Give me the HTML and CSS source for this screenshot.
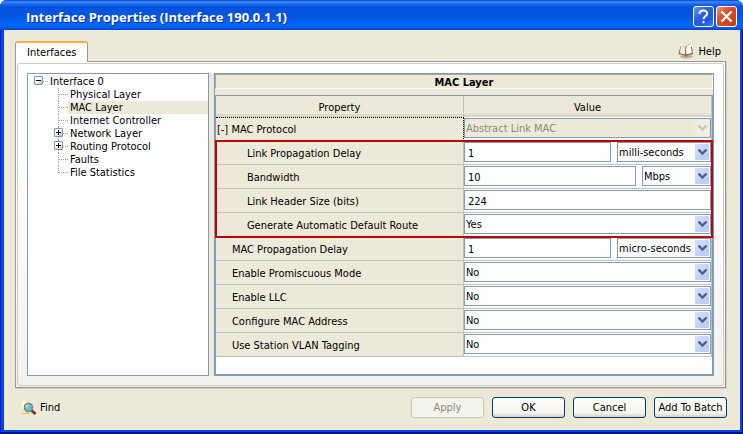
FILE: index.html
```html
<!DOCTYPE html>
<html lang="en">
<head>
<meta charset="utf-8">
<title>Interface Properties (Interface 190.0.1.1)</title>
<link rel="stylesheet" href="styles.css">
</head>
<body>
<svg class="defs" width="0" height="0" aria-hidden="true">
  <symbol id="arrow" viewBox="0 0 14 16">
    <path d="M3.500 5.500 7.500 9.500 11.500 5.500" fill="none" stroke="currentColor" stroke-width="2.400"/>
  </symbol>
</svg>
<main class="window">
  <header class="titlebar">
    <h1>Interface Properties (Interface 190.0.1.1)</h1>
    <button class="caption help-caption" type="button" aria-label="What's this">
      <svg viewBox="0 0 19 19"><path d="M5.500 7C5.500 2.500 13.200 2.500 13.200 6.500 13.200 9 9.500 9 9.500 12.200M9.500 14v2.200" fill="none" stroke="#fff" stroke-width="2"/></svg>
    </button>
    <button class="caption close-caption" type="button" aria-label="Close">
      <svg viewBox="0 0 19 19"><path d="M4.500 4.500 14.500 14.500M14.500 4.500 4.500 14.500" fill="none" stroke="#fff" stroke-width="2.400"/></svg>
    </button>
  </header>
  <div class="client">
    <div class="tabbar">
      <button class="tab" type="button">Interfaces</button>
      <a class="tool help" href="#help">
        <svg width="16" height="15" viewBox="0 0 16 15">
          <ellipse cx="8.500" cy="12.500" rx="6.500" ry="1.800" fill="#b5b1a2"/>
          <path d="M2.500 2.500 0.300 10.300 6.500 11 8 13 9.500 11 15 10.300 14 3Z" fill="#8a5230"/>
          <path d="M3 2 1.500 9.200 7.500 10.500 8 3.200Z" fill="#f1ece0"/>
          <path d="M8 3.500 9.500 1 12.500 0.300 14 9 8 10.600Z" fill="#fff"/>
          <path d="M8 3.500 9.500 1 12.500 0.300" fill="none" stroke="#aaa69c" stroke-width=".7"/>
          <path d="M7.700 3V11.500" stroke="#75604f" stroke-width=".9"/>
        </svg>
        Help
      </a>
    </div>
    <section class="panel">
      <div class="panel-inner">
        <nav class="tree" aria-label="Interfaces">
          <ul>
            <li class="root"><button class="toggle" type="button" aria-label="Collapse"><svg viewBox="0 0 7 7"><path d="M1 3.500H6" stroke="#000"/></svg></button><a href="#i0">Interface 0</a>
              <ul>
                <li><a href="#physical">Physical Layer</a></li>
                <li><a class="selected" href="#mac">MAC Layer</a></li>
                <li><a href="#controller">Internet Controller</a></li>
                <li><button class="toggle" type="button" aria-label="Expand"><svg viewBox="0 0 7 7"><path d="M1 3.500H6M3.500 1V6" stroke="#000"/></svg></button><a href="#network">Network Layer</a></li>
                <li><button class="toggle" type="button" aria-label="Expand"><svg viewBox="0 0 7 7"><path d="M1 3.500H6M3.500 1V6" stroke="#000"/></svg></button><a href="#routing">Routing Protocol</a></li>
                <li><a href="#faults">Faults</a></li>
                <li><a href="#stats">File Statistics</a></li>
              </ul>
            </li>
          </ul>
        </nav>
        <div class="splitter"></div>
        <div class="sheet">
          <h2>MAC Layer</h2>
          <div class="grid-wrap">
            <table>
              <thead><tr><th scope="col">Property</th><th scope="col">Value</th></tr></thead>
              <tbody>
                <tr class="focused"><td class="group"><label for="proto">[-] MAC Protocol</label></td>
                  <td><div class="field"><span class="combo"><select id="proto" disabled><option>Abstract Link MAC</option></select><svg><use href="#arrow"/></svg></span></div></td></tr>
              </tbody>
              <tbody class="marked">
                <tr><td><label for="lpd">Link Propagation Delay</label></td>
                  <td><div class="field"><input id="lpd" type="text" value="1"><span class="combo unit"><select aria-label="Delay unit"><option>milli-seconds</option></select><svg><use href="#arrow"/></svg></span></div></td></tr>
                <tr><td><label for="bw">Bandwidth</label></td>
                  <td><div class="field"><input id="bw" type="text" value="10"><span class="combo unit-short"><select aria-label="Bandwidth unit"><option>Mbps</option></select><svg><use href="#arrow"/></svg></span></div></td></tr>
                <tr><td><label for="lhs">Link Header Size (bits)</label></td>
                  <td><div class="field"><input id="lhs" type="text" value="224"></div></td></tr>
                <tr><td><label for="route">Generate Automatic Default Route</label></td>
                  <td><div class="field"><span class="combo"><select id="route"><option>Yes</option></select><svg><use href="#arrow"/></svg></span></div></td></tr>
              </tbody>
              <tbody>
                <tr><td><label for="mpd">MAC Propagation Delay</label></td>
                  <td><div class="field"><input id="mpd" type="text" value="1"><span class="combo unit"><select aria-label="MAC delay unit"><option>micro-seconds</option></select><svg><use href="#arrow"/></svg></span></div></td></tr>
                <tr><td><label for="prom">Enable Promiscuous Mode</label></td>
                  <td><div class="field"><span class="combo"><select id="prom"><option>No</option></select><svg><use href="#arrow"/></svg></span></div></td></tr>
                <tr><td><label for="llc">Enable LLC</label></td>
                  <td><div class="field"><span class="combo"><select id="llc"><option>No</option></select><svg><use href="#arrow"/></svg></span></div></td></tr>
                <tr><td><label for="addr">Configure MAC Address</label></td>
                  <td><div class="field"><span class="combo"><select id="addr"><option>No</option></select><svg><use href="#arrow"/></svg></span></div></td></tr>
                <tr><td><label for="vlan">Use Station VLAN Tagging</label></td>
                  <td><div class="field"><span class="combo"><select id="vlan"><option>No</option></select><svg><use href="#arrow"/></svg></span></div></td></tr>
              </tbody>
            </table>
          </div>
        </div>
      </div>
    </section>
    <footer class="actions">
      <a class="tool find" href="#find">
        <svg width="17" height="17" viewBox="0 0 17 17">
          <path d="M1 1H8.500L10.500 3.500V14.500H1Z" fill="#f5e4a8"/>
          <path d="M1.500 1.500H6.500V6L1.500 11Z" fill="#fffbe4"/>
          <path d="M1 14.500H10" stroke="#cfc08c" stroke-width="1"/>
          <path d="M11.500 11.500 15.500 15" stroke="#7d2f12" stroke-width="2.800"/>
          <circle cx="8.500" cy="8.500" r="4" fill="#62c3cc" stroke="#77858c" stroke-width="1.600"/>
          <path d="M6.300 8.500A2.300 2.300 0 0 1 8.500 6.200" fill="none" stroke="#d5f4f4" stroke-width="1.200"/>
        </svg>
        Find
      </a>
      <button type="button" disabled>Apply</button>
      <button type="button">OK</button>
      <button type="button">Cancel</button>
      <button type="button">Add To Batch</button>
    </footer>
  </div>
</main>
</body>
</html>
```
FILE: styles.css
```css
* { box-sizing: border-box; }

body {
  margin: 0;
  background: #fff;
  color: #000;
  font: 11px/13px "DejaVu Sans Condensed", "Noto Sans", sans-serif;
}

button, input, select { margin: 0; font: inherit; color: inherit; }
a { color: inherit; text-decoration: none; }
ul { margin: 0; padding: 0; list-style: none; }
.defs { position: absolute; }

.window {
  display: flex;
  flex-direction: column;
  min-height: 100vh;
  padding: 0 3px 4px 4px;
  border-radius: 7px 7px 0 0;
  background: #0046e0;
  box-shadow: inset -1px -2px 0 #00138c, inset 1px 0 0 #0019cf;
  overflow: hidden;
}

.titlebar {
  display: flex;
  align-items: center;
  gap: 2px;
  height: 30px;
  margin: 0 -3px 0 -4px;
  padding: 3px 6px 0 26px;
  background: linear-gradient(#0a45c8 0, #3c8cf8 2px, #1a6af0 4px, #0453dd 7px, #0355e0 16px, #0466fc 24px, #0462f4 27px, #0043cc 30px);
}

.titlebar h1 {
  flex: 1;
  margin: 0;
  color: #fff;
  font: bold 13px/18px "Open Sans", sans-serif;
  text-shadow: 1px 1px 0 #0b2f92;
}

.caption {
  width: 21px;
  height: 21px;
  padding: 0;
  border: 1px solid #fff;
  border-radius: 3px;
}
.caption svg { display: block; width: 19px; height: 19px; }
.help-caption { background: linear-gradient(135deg, #6f93ee, #2c5fe0 40%, #2358d8 70%, #3c7cf8); }
.close-caption { background: linear-gradient(135deg, #ee9578, #dc4c28 40%, #d44420 70%, #c03c18); }

.client {
  flex: 1;
  display: flex;
  flex-direction: column;
  padding: 11px 13px 12px 11px;
  background: #ece9d8;
}

.tabbar { display: flex; justify-content: space-between; align-items: flex-start; height: 20px; }

.tab {
  position: relative;
  z-index: 1;
  height: 21px;
  padding: 0 11px;
  border: 1px solid #919b9c;
  border-top: 2px solid #f9b233;
  border-bottom: 0;
  border-radius: 3px 3px 0 0;
  background: #fff;
}

.tool { display: flex; align-items: center; gap: 4px; }
.help { height: 20px; margin-right: 6px; }

.panel {
  flex: 1;
  display: flex;
  margin-right: 1px;
  padding: 1px;
  border: 1px solid #919b9c;
  box-shadow: 1px 1px 0 #d0cebf;
  background: linear-gradient(#fff 25%, #f3f1ec);
}

.panel-inner {
  flex: 1;
  display: flex;
  padding: 9px;
  border: 1px solid #d0cebf;
  border-radius: 3px;
}

.tree { flex: 181; border: 1px solid #7f9db9; background: #fff; }
.splitter { width: 5px; background: #ece9d8; }
.sheet { flex: 501; display: flex; flex-direction: column; border: 1px solid #7f9db9; background: #ece9d8; }

.tree > ul { padding: 1px 0 0 6px; }
.tree li { position: relative; }
.tree a { display: block; margin-left: 14px; padding-left: 2px; }
.tree ul ul { padding-left: 20px; }
.tree .selected { background: #ece9d8; }
.tree li li::before {
  content: "";
  position: absolute;
  top: 6px;
  left: 4px;
  width: 10px;
  border-top: 1px dotted #a0a0a0;
}
.tree li li::after {
  content: "";
  position: absolute;
  top: 0;
  left: 4px;
  height: 13px;
  border-left: 1px dotted #a0a0a0;
}
.tree li li:last-child::after { height: 7px; }
.root::before {
  content: "";
  position: absolute;
  top: 6px;
  left: 9px;
  width: 5px;
  border-top: 1px dotted #a0a0a0;
}
.toggle {
  position: absolute;
  z-index: 1;
  top: 1px;
  left: 0;
  width: 9px;
  height: 9px;
  padding: 0;
  border: 1px solid #7898b5;
  border-radius: 1px;
  background: linear-gradient(135deg, #fff 40%, #c8c0b0);
}
.toggle svg { display: block; width: 7px; height: 7px; }

.sheet h2 {
  height: 15px;
  margin: 0 0 6px;
  border-top: 1px solid #aca899;
  border-left: 1px solid #aca899;
  border-right: 1px solid #fff;
  border-bottom: 1px solid #fff;
  font: bold 11px/15px "DejaVu Sans Condensed", sans-serif;
  text-align: center;
}

.grid-wrap { flex: 1; border: 1px solid #7f9db9; background: #fff; }

table { width: 100%; table-layout: fixed; border-collapse: separate; border-spacing: 0; }
th, td { padding: 0; text-align: left; }
th {
  height: 21px;
  padding-top: 2px;
  border-right: 1px solid #c8c5b2;
  background: linear-gradient(#ece9d8 80%, #d2cebe);
  font-weight: normal;
  text-align: center;
}
td { height: 24px; border-right: 1px solid #c0c0c0; border-bottom: 1px solid #c0c0c0; }
td:first-child { padding: 2px 0 0 16px; background: #ece9d8; }
td.group:first-child { padding: 0 0 0 1px; }
.marked td:first-child { padding-left: 31px; }
.focused td:first-child { border-top: 1px dotted #000; border-right: 1px dotted #000; }
.marked { position: relative; outline: 2px solid #c00000; outline-offset: -1px; }

.field { display: flex; gap: 6px; height: 20px; margin-bottom: 1px; }

.field input {
  flex: 1;
  min-width: 0;
  padding: 2px 3px 0;
  border: 1px solid #7f9db9;
  background: #fff;
}

.combo { position: relative; flex: 1; display: flex; }
.unit { flex: 0 0 94px; }
.unit-short { flex: 0 0 69px; }
.combo select {
  flex: 1;
  min-width: 0;
  padding: 0 1px;
  border: 1px solid #7f9db9;
  border-radius: 0;
  background: #fff;
  appearance: none;
}
.combo svg {
  position: absolute;
  top: 2px;
  right: 2px;
  width: 14px;
  height: 16px;
  border-radius: 1px;
  background: linear-gradient(135deg, #d4e0fd, #b4c8f6);
  color: #4d6185;
  pointer-events: none;
}
.combo select:disabled { background: #ece9d8; color: #8c8a7e; opacity: 1; }
.combo select:disabled + svg { background: #f0eee2; color: #c9c7ba; }

.actions { display: flex; gap: 8px; padding-top: 9px; }
.find { gap: 3px; margin: 0 auto 0 5px; }
.actions button {
  width: 73px;
  height: 21px;
  padding: 0;
  border: 1px solid #003c74;
  border-radius: 3px;
  background: linear-gradient(#fff, #f4f3ec 80%, #d8d0c4);
  white-space: nowrap;
}
.actions button:disabled { border-color: #c9c7ba; background: #f5f4ea; color: #8c8a7e; }
```
